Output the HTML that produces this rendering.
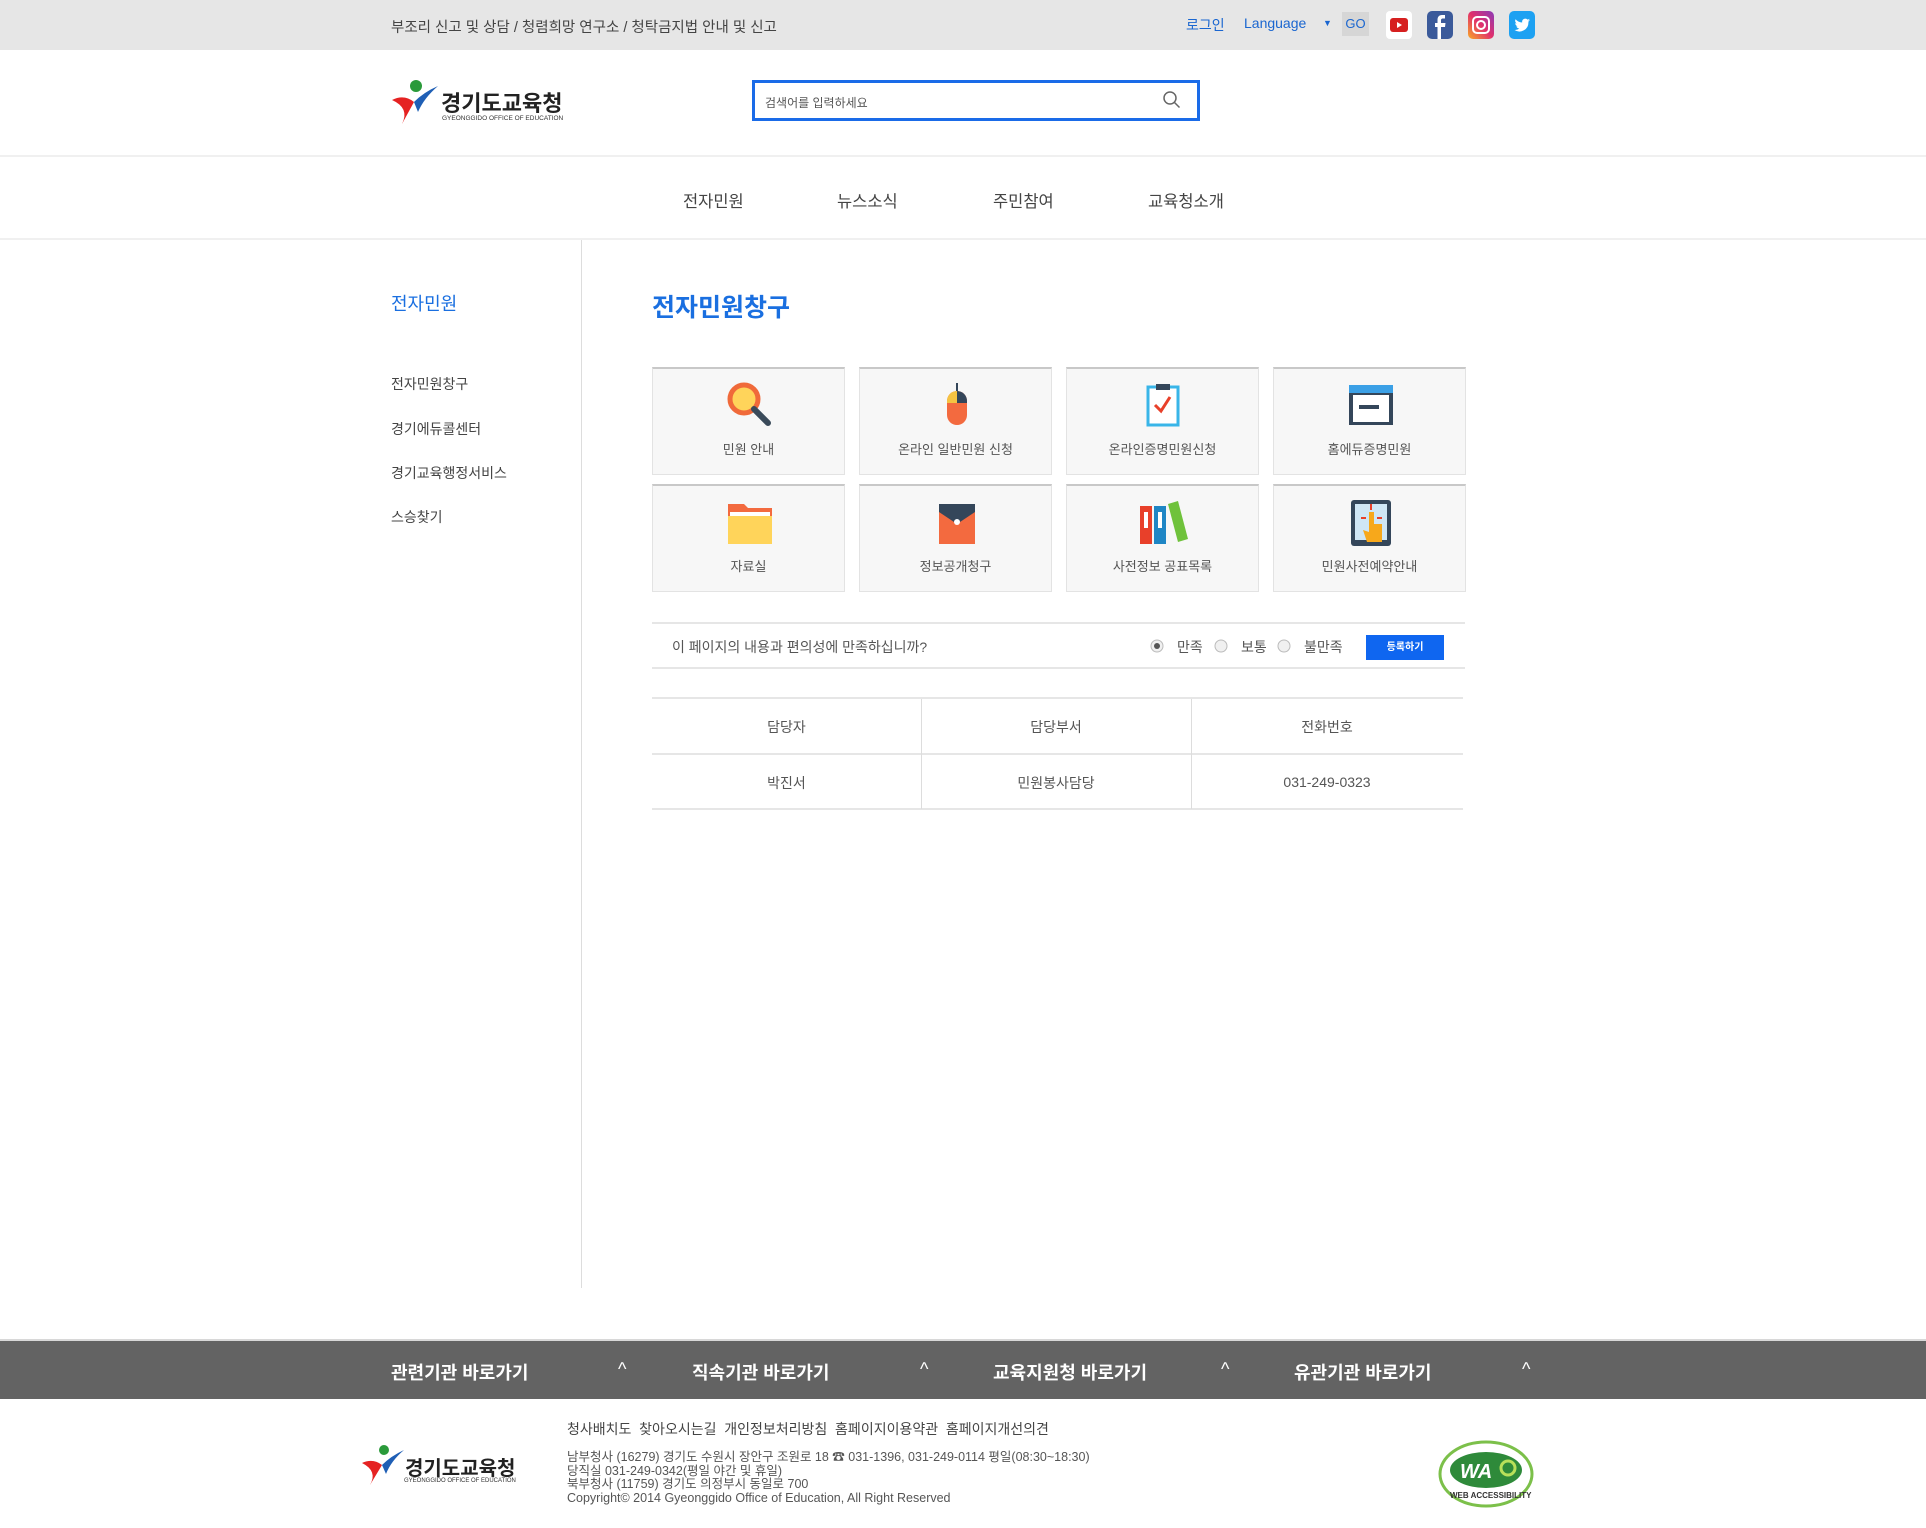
<!DOCTYPE html>
<html><head><meta charset="utf-8">
<style>
*{margin:0;padding:0;box-sizing:border-box}
body{width:1926px;height:1528px;background:#fff;font-family:"Liberation Sans","Noto Sans CJK KR",sans-serif;color:#444;position:relative;overflow:hidden}
.a{position:absolute;white-space:nowrap}
.top{position:absolute;left:0;top:0;width:1926px;height:50px;background:#e6e6e6}
.box{position:absolute;width:193px;height:108px;background:#f7f7f7;border:1px solid #e3e3e3;border-top:2px solid #c8c8c8}
.box .l{position:absolute;left:0;right:0;top:70px;text-align:center;font-size:13px;color:#555}
.box svg{position:absolute;left:71px;top:12px}
.fb{position:absolute;left:0;top:1339px;width:1926px;height:60px;background:#636363;border-top:2px solid #d8d8d8}
.fb span{position:absolute;top:18px;color:#fff;font-size:18px;font-weight:bold}
</style></head><body>
<div class="top"></div>
<div class="a" style="left:391px;top:16px;font-size:14.5px;color:#444">부조리 신고 및 상담 / 청렴희망 연구소 / 청탁금지법 안내 및 신고</div>
<div class="a" style="left:1186px;top:15px;font-size:14px;color:#1a66d0">로그인</div>
<div class="a" style="left:1244px;top:15px;font-size:14px;color:#1a66d0">Language</div>
<div class="a" style="left:1323px;top:18px;font-size:9px;color:#1a66d0">▼</div>
<div class="a" style="left:1342px;top:12px;width:27px;height:24px;background:#d6d6d6;font-size:13px;color:#1a66d0;text-align:center;line-height:24px">GO</div>
<svg class="a" style="left:1385px;top:10px" width="28" height="30"><rect x="1" y="1" width="26" height="28" rx="4" fill="#fff"/><rect x="5" y="8" width="18" height="14" rx="3" fill="#d62020"/><path d="M12 12l5 3-5 3z" fill="#fff"/></svg>
<svg class="a" style="left:1426px;top:10px" width="28" height="30"><rect x="1" y="1" width="26" height="28" rx="5" fill="#3b5a9a"/><path d="M15 29V17h4l.5-4H15v-2.5c0-1.2.4-2 2-2h2V5h-3c-3 0-4.5 2-4.5 4.8V13H9v4h2.5v12z" fill="#fff"/></svg>
<svg class="a" style="left:1467px;top:10px" width="28" height="30"><defs><linearGradient id="ig" x1="0" y1="1" x2="1" y2="0"><stop offset="0" stop-color="#f9a825"/><stop offset=".5" stop-color="#e1306c"/><stop offset="1" stop-color="#8a3ab9"/></linearGradient></defs><rect x="1" y="1" width="26" height="28" rx="5" fill="url(#ig)"/><rect x="6" y="7" width="16" height="16" rx="4" fill="none" stroke="#fff" stroke-width="2"/><circle cx="14" cy="15" r="4" fill="none" stroke="#fff" stroke-width="2"/></svg>
<svg class="a" style="left:1508px;top:10px" width="28" height="30"><rect x="1" y="1" width="26" height="28" rx="5" fill="#1da1f2"/><path d="M22 10c-.6.3-1.2.4-1.8.5.7-.4 1.1-1 1.4-1.7-.6.4-1.3.6-2 .8a3.2 3.2 0 0 0-5.4 2.9A9 9 0 0 1 7.6 9.2a3.2 3.2 0 0 0 1 4.3c-.5 0-1-.2-1.4-.4 0 1.5 1.1 2.8 2.5 3.1-.5.1-1 .2-1.4.1.4 1.300 1.6 2.2 3 2.2A6.5 6.5 0 0 1 6.5 20a9 9 0 0 0 13.9-8v-.4c.6-.4 1.1-1 1.6-1.6z" fill="#fff"/></svg>

<svg class="a" style="left:390px;top:78px" width="52" height="48"><circle cx="26" cy="8" r="6" fill="#2a9a3a"/><path d="M2 22 Q14 16 24 24 L12 46 Q20 30 2 22z" fill="#e52222"/><path d="M24 24 Q34 14 48 8 Q34 20 28 34z" fill="#1f5fb5"/></svg>
<div class="a" style="left:441px;top:86px;font-size:22px;font-weight:bold;color:#222">경기도교육청</div>
<div class="a" style="left:442px;top:115px;font-size:6.5px;color:#333">GYEONGGIDO OFFICE OF EDUCATION</div>

<div class="a" style="left:752px;top:80px;width:448px;height:41px;border:3px solid #1a6be8;background:#fff"></div>
<div class="a" style="left:765px;top:94px;font-size:12px;color:#555">검색어를 입력하세요</div>
<svg class="a" style="left:1162px;top:90px" width="20" height="20"><circle cx="8" cy="8" r="6" fill="none" stroke="#666" stroke-width="1.5"/><path d="M12.5 12.5l5 5" stroke="#666" stroke-width="1.5"/></svg>

<div class="a" style="left:0;top:155px;width:1926px;height:2px;background:#f0f0f0"></div>
<div class="a" style="left:683px;top:188px;font-size:16.5px;color:#444">전자민원</div>
<div class="a" style="left:837px;top:188px;font-size:16.5px;color:#444">뉴스소식</div>
<div class="a" style="left:993px;top:188px;font-size:16.5px;color:#444">주민참여</div>
<div class="a" style="left:1148px;top:188px;font-size:16.5px;color:#444">교육청소개</div>
<div class="a" style="left:0;top:238px;width:1926px;height:2px;background:#f0f0f0"></div>
<div class="a" style="left:581px;top:240px;width:1px;height:1048px;background:#ddd"></div>

<div class="a" style="left:391px;top:290px;font-size:18px;color:#1a6fe0">전자민원</div>
<div class="a" style="left:391px;top:374px;font-size:14px;color:#444">전자민원창구</div>
<div class="a" style="left:391px;top:419px;font-size:14px;color:#444">경기에듀콜센터</div>
<div class="a" style="left:391px;top:463px;font-size:14px;color:#444">경기교육행정서비스</div>
<div class="a" style="left:391px;top:507px;font-size:14px;color:#444">스승찾기</div>

<div class="a" style="left:652px;top:288px;font-size:25px;font-weight:bold;color:#1a6fe0">전자민원창구</div>

<div class="box" style="left:652px;top:367px"><svg width="52" height="50"><circle cx="20" cy="18" r="14" fill="#ffd45a" stroke="#f06a3a" stroke-width="5"/><path d="M30 28l14 14" stroke="#3a4a5a" stroke-width="6" stroke-linecap="round"/></svg><div class="l">민원 안내</div></div>
<div class="box" style="left:859px;top:367px"><svg width="52" height="50"><rect x="16" y="10" width="20" height="34" rx="10" fill="#f36a3f"/><path d="M16 20a10 10 0 0 1 10-10v12H16z" fill="#f5c342"/><path d="M26 10v12h10v-2a10 10 0 0 0-10-10z" fill="#34465a"/><path d="M26 10 V2" stroke="#34465a" stroke-width="2"/></svg><div class="l">온라인 일반민원 신청</div></div>
<div class="box" style="left:1066px;top:367px"><svg width="52" height="50"><rect x="10" y="6" width="30" height="38" fill="#fff" stroke="#39b5e8" stroke-width="3"/><rect x="18" y="3" width="14" height="6" fill="#34465a"/><path d="M17 24l6 6 9-14" fill="none" stroke="#e8402a" stroke-width="3"/></svg><div class="l">온라인증명민원신청</div></div>
<div class="box" style="left:1273px;top:367px"><svg width="52" height="50"><rect x="4" y="4" width="44" height="40" fill="#34465a"/><rect x="4" y="4" width="44" height="8" fill="#3ba0e6"/><rect x="8" y="14" width="36" height="27" fill="#fff"/><rect x="14" y="24" width="20" height="4" fill="#34465a"/></svg><div class="l">홈에듀증명민원</div></div>

<div class="box" style="left:652px;top:484px"><svg width="52" height="50"><path d="M4 6h16l4 4h24v8H4z" fill="#f36a3f"/><rect x="6" y="14" width="40" height="8" fill="#fff"/><rect x="4" y="18" width="44" height="28" fill="#ffd45a"/></svg><div class="l">자료실</div></div>
<div class="box" style="left:859px;top:484px"><svg width="52" height="50"><rect x="8" y="6" width="36" height="40" fill="#f36a3f"/><path d="M8 6h36v8L26 26 8 14z" fill="#34465a"/><circle cx="26" cy="24" r="3" fill="#fff"/></svg><div class="l">정보공개청구</div></div>
<div class="box" style="left:1066px;top:484px"><svg width="52" height="50"><rect x="2" y="8" width="12" height="38" fill="#e8402a"/><rect x="16" y="8" width="12" height="38" fill="#1f86c5"/><path d="M30 6l10-3 10 38-10 3z" fill="#6fc23b"/><rect x="6" y="14" width="4" height="16" fill="#fff"/><rect x="20" y="14" width="4" height="16" fill="#fff"/></svg><div class="l">사전정보 공표목록</div></div>
<div class="box" style="left:1273px;top:484px"><svg width="52" height="50"><rect x="6" y="2" width="40" height="46" rx="3" fill="#34465a"/><rect x="10" y="6" width="32" height="36" fill="#cfe6f5"/><path d="M24 14h5v12h8v18H22l-4-12 6 2z" fill="#f7a81b"/><path d="M26 6v6M16 20h5M32 20h5" stroke="#e8402a" stroke-width="2"/></svg><div class="l">민원사전예약안내</div></div>

<div class="a" style="left:652px;top:622px;width:813px;height:2px;background:#e6e6e6"></div>
<div class="a" style="left:652px;top:667px;width:813px;height:2px;background:#e6e6e6"></div>
<div class="a" style="left:672px;top:637px;font-size:14px;color:#555">이 페이지의 내용과 편의성에 만족하십니까?</div>
<svg class="a" style="left:1150px;top:639px" width="14" height="14"><circle cx="7" cy="7" r="6" fill="#f0f0f0" stroke="#bbb"/><circle cx="7" cy="7" r="3" fill="#555"/></svg>
<div class="a" style="left:1177px;top:637px;font-size:14px;color:#555">만족</div>
<svg class="a" style="left:1214px;top:639px" width="14" height="14"><circle cx="7" cy="7" r="6" fill="#f0f0f0" stroke="#bbb"/></svg>
<div class="a" style="left:1241px;top:637px;font-size:14px;color:#555">보통</div>
<svg class="a" style="left:1277px;top:639px" width="14" height="14"><circle cx="7" cy="7" r="6" fill="#f0f0f0" stroke="#bbb"/></svg>
<div class="a" style="left:1304px;top:637px;font-size:14px;color:#555">불만족</div>
<div class="a" style="left:1366px;top:635px;width:78px;height:25px;background:#0f66f0;color:#fff;font-size:10px;font-weight:bold;text-align:center;line-height:25px">등록하기</div>

<div class="a" style="left:652px;top:697px;width:811px;height:2px;background:#e6e6e6"></div>
<div class="a" style="left:652px;top:753px;width:811px;height:2px;background:#e6e6e6"></div>
<div class="a" style="left:652px;top:808px;width:811px;height:2px;background:#e6e6e6"></div>
<div class="a" style="left:921px;top:699px;width:1px;height:110px;background:#ddd"></div>
<div class="a" style="left:1191px;top:699px;width:1px;height:110px;background:#ddd"></div>
<div class="a" style="left:652px;top:717px;width:269px;text-align:center;font-size:14px;color:#555">담당자</div>
<div class="a" style="left:921px;top:717px;width:270px;text-align:center;font-size:14px;color:#555">담당부서</div>
<div class="a" style="left:1191px;top:717px;width:272px;text-align:center;font-size:14px;color:#555">전화번호</div>
<div class="a" style="left:652px;top:773px;width:269px;text-align:center;font-size:14px;color:#555">박진서</div>
<div class="a" style="left:921px;top:773px;width:270px;text-align:center;font-size:14px;color:#555">민원봉사담당</div>
<div class="a" style="left:1191px;top:774px;width:272px;text-align:center;font-size:14px;color:#555">031-249-0323</div>

<div class="fb">
<span style="left:391px">관련기관 바로가기</span><span style="left:618px;font-weight:normal">^</span>
<span style="left:692px">직속기관 바로가기</span><span style="left:920px;font-weight:normal">^</span>
<span style="left:993px">교육지원청 바로가기</span><span style="left:1221px;font-weight:normal">^</span>
<span style="left:1294px">유관기관 바로가기</span><span style="left:1522px;font-weight:normal">^</span>
</div>

<svg class="a" style="left:360px;top:1443px" width="46" height="44"><circle cx="24" cy="7" r="5" fill="#2a9a3a"/><path d="M2 20 Q13 15 22 22 L10 42 Q18 28 2 20z" fill="#e52222"/><path d="M22 22 Q31 13 44 7 Q31 18 26 31z" fill="#1f5fb5"/></svg>
<div class="a" style="left:405px;top:1452px;font-size:20px;font-weight:bold;color:#222">경기도교육청</div>
<div class="a" style="left:404px;top:1478px;font-size:6px;color:#333">GYEONGGIDO OFFICE OF EDUCATION</div>
<div class="a" style="left:567px;top:1419px;font-size:14px;color:#444">청사배치도 &nbsp;찾아오시는길 &nbsp;개인정보처리방침 &nbsp;홈페이지이용약관 &nbsp;홈페이지개선의견</div>
<div class="a" style="left:567px;top:1451px;font-size:12.5px;color:#555;line-height:13.5px">남부청사 (16279) 경기도 수원시 장안구 조원로 18 ☎ 031-1396, 031-249-0114 평일(08:30~18:30)<br>당직실 031-249-0342(평일 야간 및 휴일)<br>북부청사 (11759) 경기도 의정부시 동일로 700<br>Copyright© 2014 Gyeonggido Office of Education, All Right Reserved</div>
<svg class="a" style="left:1436px;top:1438px" width="100" height="72"><ellipse cx="50" cy="36" rx="46" ry="32" fill="#fff" stroke="#7cc04a" stroke-width="3"/><ellipse cx="50" cy="32" rx="36" ry="18" fill="#2e8a3a"/><text x="24" y="40" font-family="Liberation Sans" font-weight="bold" font-style="italic" font-size="20" fill="#fff">WA</text><circle cx="72" cy="30" r="7" fill="none" stroke="#b8e05a" stroke-width="3"/><text x="14" y="60" font-family="Liberation Sans" font-weight="bold" font-size="8" fill="#333">WEB ACCESSIBILITY</text></svg>
</body></html>
